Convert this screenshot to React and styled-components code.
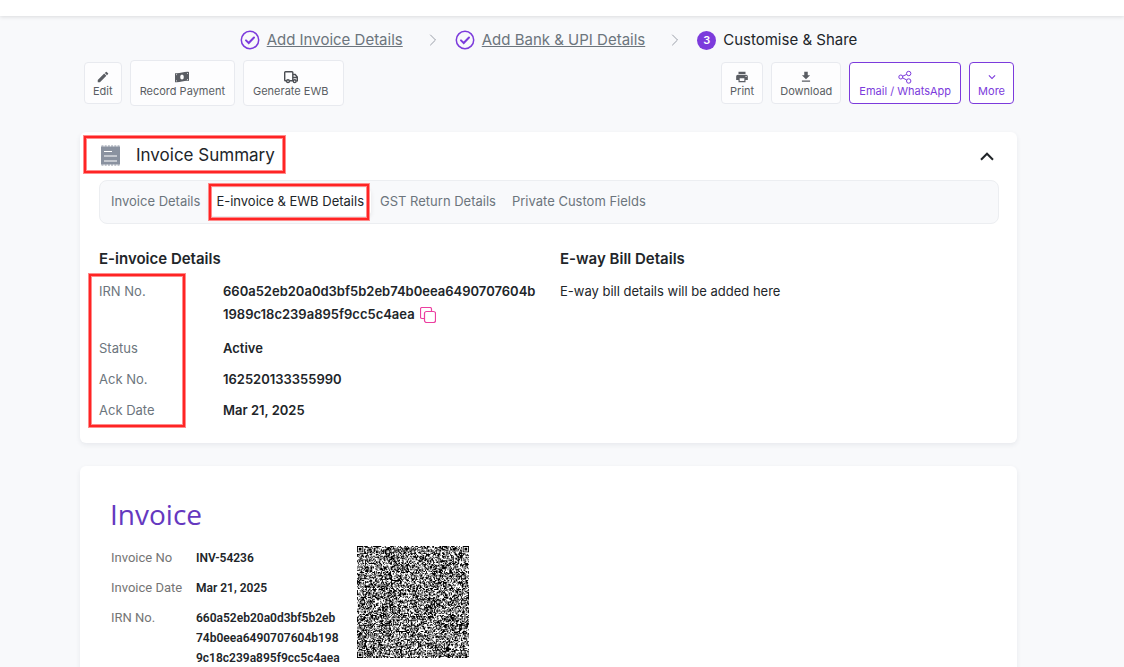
import React from 'react';
import styled, { createGlobalStyle, css } from 'styled-components';
import { MdEdit, MdPrint, MdGetApp, MdKeyboardArrowDown } from 'react-icons/md';

const GlobalStyle = createGlobalStyle`
  *,
  *::after {
    box-sizing: border-box;
  }

  body {
    margin: 0;
    background-color: #f8f9fb;
    color: #212529;
    font-family: Inter, 'Liberation Sans', sans-serif;
    font-size: 13px;
  }

  h1, h2, h3, p, dl, dt, dd, ol {
    margin: 0;
    padding: 0;
  }

  button {
    font-family: inherit;
    cursor: pointer;
  }
`;

const TopBar = styled.header`
  height: 16px;
  background-color: #fff;
  box-shadow: 0 1px 4px rgba(0, 0, 0, 0.12);
`;

const Page = styled.main`
  padding: 12px 107px 0 80px;
`;

const Steps = styled.ol`
  display: flex;
  justify-content: center;
  align-items: center;
  gap: 18px;
  list-style: none;
`;

const Step = styled.li`
  display: flex;
  align-items: center;
  gap: 7px;
  font-size: 15px;
  line-height: 24px;
`;

const StepDivider = styled.li`
  display: flex;
  padding-left: 8px;
`;

const StepLink = styled.a`
  color: #6c757d;
  text-decoration: underline;
`;

const StepNumber = styled.span`
  display: flex;
  align-items: center;
  justify-content: center;
  width: 19px;
  height: 19px;
  border-radius: 50%;
  background-color: #7c3bdc;
  color: #fff;
  font-size: 11px;
  font-weight: 600;
`;

const Toolbar = styled.div`
  display: flex;
  justify-content: space-between;
  padding: 8px 3px 0 4px;
  height: 80px;
`;

const ButtonGroup = styled.div`
  display: flex;
  align-items: flex-start;
  gap: 8px;
`;

const ToolButton = styled.button`
  display: flex;
  flex-direction: column;
  align-items: center;
  margin-top: ${({ $tall }) => ($tall ? '0' : '2px')};
  padding: ${({ $tall }) => ($tall ? '9px 9px 7px' : '7px 8px 5px')};
  border: 1px solid #e8eaef;
  border-radius: 4px;
  background-color: #fdfdfe;
  color: #5a5d63;
  font-size: 11px;
  line-height: 14px;

  ${({ $trailing }) =>
    $trailing &&
    css`
      padding-right: 14px;
    `}

  ${({ $primary }) =>
    $primary &&
    css`
      border-color: #7c3bdc;
      background-color: #fff;
      color: #7c3bdc;
    `}

  ${({ $wide }) =>
    $wide &&
    css`
      padding-right: 9px;
      padding-left: 9px;
    `}
`;

const Card = styled.section`
  margin-bottom: 23px;
  padding: 0 18px 21px 19px;
  border-radius: 6px;
  background-color: #fff;
  box-shadow: 0 2px 5px rgba(40, 50, 80, 0.08);
`;

const SummaryHeader = styled.div`
  display: flex;
  justify-content: space-between;
  align-items: center;
  height: 48px;
  padding-right: 5px;
`;

const highlight = css`
  position: relative;

  &::after {
    content: '';
    position: absolute;
    border: 2px solid #ff2424;
    box-shadow: 0 0 0 1px #ff8c8c, inset 0 0 0 1px #ff8c8c;
    pointer-events: none;
  }
`;

const SummaryTitle = styled.h2`
  ${highlight}
  display: flex;
  align-items: center;
  gap: 13px;
  padding-bottom: 2px;
  font-size: 17px;
  font-weight: 400;
  line-height: 24px;

  &::after {
    inset: -7px -10px -4px -15px;
  }
`;

const IconButton = styled.button`
  display: inline-flex;
  padding: 0;
  border: 0;
  background: none;
  color: ${({ $color }) => $color};
  vertical-align: middle;
`;

const CopyButton = styled(IconButton)`
  margin-left: 2px;
`;

const Tabs = styled.div`
  display: flex;
  align-items: center;
  gap: 2px;
  height: 44px;
  padding: 0 4px;
  border: 1px solid #eceef1;
  border-radius: 8px;
  background-color: #f8f9fb;
`;

const Tab = styled.button`
  height: 28px;
  padding: 0 7px 2px;
  border: 0;
  border-radius: 5px;
  background: none;
  color: #6c757d;
  font-size: 13px;

  ${({ $active }) =>
    $active &&
    css`
      ${highlight}
      background-color: #fff;
      color: #212529;
      box-shadow: 0 2px 5px rgba(0, 0, 0, 0.08);

      &::after {
        inset: -4px 2px -4px 0;
      }
    `}
`;

const Columns = styled.div`
  display: grid;
  grid-template-columns: 461px 1fr;
  padding-top: 23px;
`;

const SubTitle = styled.h3`
  margin-bottom: 10px;
  font-size: 15px;
  font-weight: 600;
  line-height: 23px;
`;

const Details = styled.dl`
  ${highlight}
  display: grid;
  grid-template-columns: 124px 316px;
  row-gap: 8px;
  line-height: 23px;

  &::after {
    inset: -6px auto -5px -10px;
    width: 96px;
  }
`;

const Term = styled.dt`
  color: #6c757d;
`;

const Value = styled.dd`
  font-weight: 600;
  overflow-wrap: anywhere;
`;

const LongValue = styled(Value)`
  padding-bottom: 3px;
`;

const Plain = styled.p`
  line-height: 23px;
`;

const InvoiceCard = styled(Card)`
  padding: 28px 30px;
  font-family: Roboto, 'Open Sans', sans-serif;
`;

const InvoiceTitle = styled.h1`
  color: #6538bf;
  font-family: 'Open Sans', 'Noto Sans', sans-serif;
  font-size: 28px;
  font-weight: 400;
  line-height: 40px;
`;

const InvoiceBody = styled.div`
  display: flex;
  align-items: flex-start;
  gap: 15px;
  padding: 12px 0 0 1px;
`;

const InvoiceFields = styled.dl`
  display: grid;
  grid-template-columns: 85px 146px;
  row-gap: 10px;
  padding-top: 2px;
  line-height: 20px;
`;

const InvoiceTerm = styled.dt`
  color: #757575;
`;

const InvoiceValue = styled.dd`
  font-size: 12px;
  font-weight: 600;
  white-space: nowrap;
`;

const ValueLine = styled.span`
  display: block;
`;

const CheckIcon = () => (
  <svg width="20" height="20" viewBox="0 0 20 20" fill="none" stroke="#7c3bdc">
    <circle cx="10" cy="10" r="8.7" strokeWidth="1.5" />
    <path d="M6 10.4l2.7 2.6L14 7.5" strokeWidth="2" strokeLinecap="round" />
  </svg>
);

const StepArrow = () => (
  <StepDivider aria-hidden="true">
    <svg width="8" height="12" viewBox="0 0 8 12" fill="none" stroke="#9a9fa8">
      <path d="M1.5 1l5 5-5 5" strokeLinecap="round" />
    </svg>
  </StepDivider>
);

const CashIcon = () => (
  <svg width="14" height="14" viewBox="0 0 14 14">
    <path
      d="M0 3.2C4.7 4 9.3 1.2 14 2V11C9.3 10.2 4.7 13 0 12.2z"
      fill="currentColor"
    />
    <ellipse cx="7" cy="7.1" rx="1.8" ry="2.5" fill="#fff" />
    <path
      d="M1 4.3h1.2L1 5.5zM13 3v1.3L11.8 3zM1 11.2V9.9l1.2 1.3zM13 9.9H11.8L13 8.7z"
      fill="#fff"
    />
  </svg>
);

const TruckIcon = () => (
  <svg width="14" height="14" viewBox="0 0 14 14" fill="none" stroke="#4a4d52">
    <path
      d="M2.5 10.7H1.5a.8.8 0 0 1-.8-.8V2.5a.8.8 0 0 1 .8-.8H8a.8.8 0 0 1 .8.8v8.2H5.7M8.8 4.5h2.4l2.1 2.6v3.6h-1M8.8 7.5h4.3"
      strokeWidth="1.4"
    />
    <circle cx="4" cy="11.2" r="1.4" strokeWidth="1.4" />
    <circle cx="10.7" cy="11.2" r="1.4" strokeWidth="1.4" />
  </svg>
);

const ShareIcon = () => (
  <svg width="14" height="14" viewBox="0 0 14 14" fill="none" stroke="currentColor">
    <circle cx="2.8" cy="7" r="2" />
    <circle cx="10.7" cy="3.5" r="2.2" />
    <circle cx="10.7" cy="11" r="2.2" />
    <path d="M4.7 6.2l4-1.8M4.7 7.9l4 2.1" />
  </svg>
);

const ReceiptIcon = () => (
  <svg width="24" height="24" viewBox="0 0 24 24" fill="none">
    <path d="M2 3.5h19v18H2z" fill="#8a92a0" />
    <path d="M2.5 3h18.5M2.5 22h18.5" stroke="#8a92a0" strokeDasharray="2 1.2" />
    <path d="M5 8.5h8M5 13h13M5 18h13" stroke="#fff" strokeWidth="1.2" />
  </svg>
);

const CollapseIcon = () => (
  <svg width="14" height="9" viewBox="0 0 14 9" fill="none" stroke="currentColor">
    <path d="M1 7.7l6-6 6 6" strokeWidth="2" />
  </svg>
);

const CopyIcon = () => (
  <svg width="16" height="16" viewBox="0 0 16 16" fill="none" stroke="currentColor">
    <rect x="4.5" y="4.5" width="11" height="11" rx="2" strokeWidth="1.2" />
    <path
      d="M4.5 11.5H2A1.5 1.5 0 0 1 .5 10V2A1.5 1.5 0 0 1 2 .5h8A1.5 1.5 0 0 1 11.5 2v2.5"
      strokeWidth="1.2"
    />
  </svg>
);

const QR_SIZE = 125;

const inFinder = (x, y) => {
  const left = x < 8;
  const right = x >= QR_SIZE - 8;
  const top = y < 8;
  const bottom = y >= QR_SIZE - 8;
  return (left && top) || (right && top) || (left && bottom);
};

// ring distance from the centre decides the dark and light squares
const ring = (x, y, cx, cy) => Math.max(Math.abs(x - cx), Math.abs(y - cy));

const isDark = (x, y, noise) => {
  if (inFinder(x, y)) {
    const cx = x < 8 ? 3 : QR_SIZE - 4;
    const cy = y < 8 ? 3 : QR_SIZE - 4;
    const d = ring(x, y, cx, cy);
    return d < 2 || d === 3;
  }
  const ax = 6 + Math.round((x - 6) / 28) * 28;
  const ay = 6 + Math.round((y - 6) / 28) * 28;
  const d = ring(x, y, ax, ay);
  if (d <= 2) return d !== 1;
  return noise < 0.5;
};

const buildQrPath = () => {
  let seed = 54236;
  let path = '';
  for (let y = 0; y < QR_SIZE; y += 1) {
    for (let x = 0; x < QR_SIZE; x += 1) {
      seed = (Math.imul(seed, 1664525) + 1013904223) >>> 0;
      if (isDark(x, y, seed / 4294967296)) path += `M${x} ${y}h1v1h-1z`;
    }
  }
  return path;
};

const qrPath = buildQrPath();

const QrCode = () => (
  <svg
    width="112"
    height="112"
    viewBox={`0 0 ${QR_SIZE} ${QR_SIZE}`}
    role="img"
    aria-label="Invoice QR code"
  >
    <path d={qrPath} fill="#000" />
  </svg>
);

const tabs = [
  'Invoice Details',
  'E-invoice & EWB Details',
  'GST Return Details',
  'Private Custom Fields',
];

const irnLines = [
  '660a52eb20a0d3bf5b2eb',
  '74b0eea6490707604b198',
  '9c18c239a895f9cc5c4aea',
];

const App = () => (
  <>
    <GlobalStyle />
    <TopBar />
    <Page>
      <Steps>
        <Step>
          <CheckIcon />
          <StepLink href="#details">Add Invoice Details</StepLink>
        </Step>
        <StepArrow />
        <Step>
          <CheckIcon />
          <StepLink href="#bank">Add Bank &amp; UPI Details</StepLink>
        </Step>
        <StepArrow />
        <Step>
          <StepNumber>3</StepNumber>
          Customise &amp; Share
        </Step>
      </Steps>

      <Toolbar>
        <ButtonGroup>
          <ToolButton>
            <MdEdit size={14} />
            Edit
          </ToolButton>
          <ToolButton $tall>
            <CashIcon />
            Record Payment
          </ToolButton>
          <ToolButton $tall $trailing>
            <TruckIcon />
            Generate EWB
          </ToolButton>
        </ButtonGroup>
        <ButtonGroup>
          <ToolButton>
            <MdPrint size={14} />
            Print
          </ToolButton>
          <ToolButton>
            <MdGetApp size={14} />
            Download
          </ToolButton>
          <ToolButton $primary $wide>
            <ShareIcon />
            Email / WhatsApp
          </ToolButton>
          <ToolButton $primary>
            <MdKeyboardArrowDown size={14} />
            More
          </ToolButton>
        </ButtonGroup>
      </Toolbar>

      <Card>
        <SummaryHeader>
          <SummaryTitle>
            <ReceiptIcon />
            Invoice Summary
          </SummaryTitle>
          <IconButton $color="#212529" aria-label="Collapse">
            <CollapseIcon />
          </IconButton>
        </SummaryHeader>
        <Tabs role="tablist">
          {tabs.map((tab, index) => (
            <Tab key={tab} role="tab" $active={index === 1} aria-selected={index === 1}>
              {tab}
            </Tab>
          ))}
        </Tabs>
        <Columns>
          <div>
            <SubTitle>E-invoice Details</SubTitle>
            <Details>
              <Term>IRN No.</Term>
              <LongValue>
                660a52eb20a0d3bf5b2eb74b0eea6490707604b1989c18c239a895f9cc5c4aea{' '}
                <CopyButton $color="#ec3fa0" aria-label="Copy IRN">
                  <CopyIcon />
                </CopyButton>
              </LongValue>
              <Term>Status</Term>
              <Value>Active</Value>
              <Term>Ack No.</Term>
              <Value>162520133355990</Value>
              <Term>Ack Date</Term>
              <Value>Mar 21, 2025</Value>
            </Details>
          </div>
          <div>
            <SubTitle>E-way Bill Details</SubTitle>
            <Plain>E-way bill details will be added here</Plain>
          </div>
        </Columns>
      </Card>

      <InvoiceCard>
        <InvoiceTitle>Invoice</InvoiceTitle>
        <InvoiceBody>
          <InvoiceFields>
            <InvoiceTerm>Invoice No</InvoiceTerm>
            <InvoiceValue>INV-54236</InvoiceValue>
            <InvoiceTerm>Invoice Date</InvoiceTerm>
            <InvoiceValue>Mar 21, 2025</InvoiceValue>
            <InvoiceTerm>IRN No.</InvoiceTerm>
            <InvoiceValue>
              {irnLines.map((line) => (
                <ValueLine key={line}>{line}</ValueLine>
              ))}
            </InvoiceValue>
          </InvoiceFields>
          <QrCode />
        </InvoiceBody>
      </InvoiceCard>
    </Page>
  </>
);

export default App;
